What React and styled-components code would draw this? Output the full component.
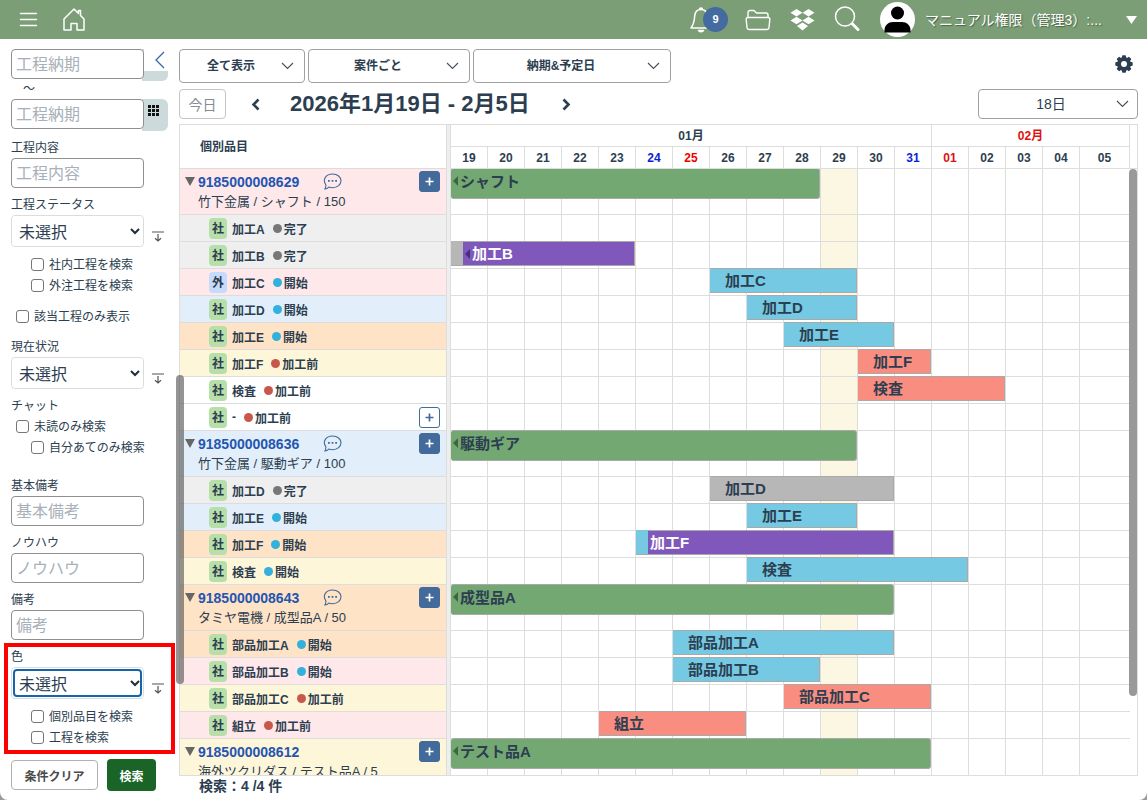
import React from 'react';
import styled, { createGlobalStyle, css } from 'styled-components';

const colors = {
  header: '#7b9e76',
  text: '#2c3e50',
  link: '#2455b0',
  primary: '#426a9b',
  line: '#dddddd',
  inputLine: '#8f8f8f',
  pink: '#fee8ea',
  gray: '#efefef',
  blue: '#e2effa',
  orange: '#fee3c7',
  yellow: '#fef6d9',
  white: '#ffffff',
};

const barColors = {
  green: '#74a873',
  sky: '#75c9e2',
  salmon: '#f98d80',
  gray: '#b7b7b7',
  purple: '#8058bb',
};

const dotColors = {
  完了: '#777777',
  開始: '#33b1dc',
  加工前: '#c9584c',
};

const GlobalStyle = createGlobalStyle`
  *, *::before, *::after {
    box-sizing: border-box;
  }

  body {
    margin: 0;
    background: #9a9a9a;
    color: ${colors.text};
    font-family: 'Liberation Sans', 'Noto Sans CJK JP', sans-serif;
    font-size: 12px;
  }

  button, input, select {
    font-family: inherit;
    color: inherit;
  }
`;

const Page = styled.div`
  display: flex;
  flex-direction: column;
  height: 100vh;
  overflow: hidden;
  background: #fff;
  border-radius: 0 0 8px 8px;
`;

/* ---------- header ---------- */

const Header = styled.header`
  display: flex;
  align-items: center;
  justify-content: space-between;
  height: 39px;
  flex: none;
  padding: 0 10px 0 19px;
  background: ${colors.header};
  color: #fff;
`;

const HeaderGroup = styled.div`
  display: flex;
  align-items: center;
  gap: ${(props) => props.$gap}px;
`;

const IconButton = styled.button`
  display: flex;
  align-items: center;
  justify-content: center;
  position: relative;
  padding: 0;
  border: 0;
  background: none;
  color: inherit;
  cursor: pointer;

  svg {
    display: block;
  }
`;

const BellButton = styled(IconButton)`
  width: 38px;
  height: 26px;
  justify-content: flex-start;
`;

const Badge = styled.span`
  position: absolute;
  top: 0;
  right: 0;
  width: 25px;
  height: 25px;
  border-radius: 50%;
  background: #436b9f;
  font-size: 11px;
  font-weight: bold;
  line-height: 25px;
  text-align: center;
`;

const UserButton = styled(IconButton)`
  gap: 10px;
  font-size: 14px;
  line-height: 20px;
  text-shadow: 1px 1px 1px rgba(40, 60, 40, 0.6);
`;

const UserName = styled.span`
  width: 191px;
  text-align: left;
  white-space: nowrap;
`;

/* ---------- sidebar ---------- */

const Body = styled.div`
  display: flex;
  flex: 1;
  min-height: 0;
`;

const Sidebar = styled.form`
  position: relative;
  flex: none;
  width: 179px;
  padding: 10px 5px 0 11px;
`;

const DateRow = styled.div`
  display: flex;
  position: relative;
  height: 30px;
`;

const TextInput = styled.input`
  position: relative;
  width: 133px;
  height: 30px;
  padding: 1px 4px 0;
  border: 1px solid ${colors.inputLine};
  border-radius: 4px;
  background: #fff;
  font-size: 16px;

  &::placeholder {
    color: #a8b0ba;
    opacity: 1;
  }
`;

const CalendarButton = styled.button`
  display: flex;
  justify-content: center;
  width: 26px;
  height: 32px;
  margin-left: -2px;
  padding: 6px 4px 0 0;
  border: 0;
  border-radius: 0 6px 6px 0;
  background: #ccdadb;
`;

const CollapseButton = styled(IconButton)`
  position: absolute;
  top: -8px;
  right: 0;
  width: 30px;
  height: 30px;
  padding: 7px 0 0 2px;
  background: #fff;
  color: #3a68ab;
`;

const Tilde = styled.div`
  height: 20px;
  padding-left: 12px;
  line-height: 20px;
`;

const Field = styled.div`
  margin-top: ${(props) => props.$top ?? 6}px;
`;

const FieldLabel = styled.label`
  display: block;
  height: 21px;
  line-height: 22px;
`;

const SelectRow = styled.div`
  display: flex;
  align-items: flex-end;
  gap: 8px;

  ${IconButton} {
    padding-bottom: 5px;
  }
`;

const SelectBox = styled.div`
  position: relative;
  width: 133px;
  height: 32px;
  padding: ${(props) => (props.$focused ? '1px' : '0')};
  border: 1px solid ${(props) => (props.$focused ? '#d3dfe8' : '#dcdcdc')};
  border-radius: 4px;

  svg {
    position: absolute;
    right: 3px;
    top: 12px;
    pointer-events: none;
  }

  select {
    appearance: none;
    width: 100%;
    height: 100%;
    padding: 2px 20px 0 ${(props) => (props.$focused ? '4px' : '7px')};
    border: ${(props) => (props.$focused ? '2px solid #1765a8' : '0')};
    border-radius: 4px;
    background: #fff;
    font-size: 16px;
  }
`;

const CheckList = styled.div`
  margin-top: ${(props) => props.$top ?? 0}px;
`;

const CheckLabel = styled.label`
  display: flex;
  align-items: center;
  gap: 5px;
  height: 21px;
  padding: 0 0 2px ${(props) => (props.$nested ? '20px' : '5px')};
  white-space: nowrap;

  input {
    appearance: none;
    flex: none;
    width: 13px;
    height: 13px;
    margin: 2px 0 0;
    border: 1px solid #767676;
    border-radius: 3px;
    background: #fff;
  }
`;

const Highlight = styled.div`
  width: 171px;
  margin: 3px 0 0 -7px;
  padding: 0 0 2px 3px;
  border: 4px solid #fe0000;

  ${FieldLabel} {
    height: 20px;
    line-height: 20px;
  }
`;

const Actions = styled.div`
  display: flex;
  align-items: center;
  gap: 9px;
  margin-top: 5px;
`;

const ClearButton = styled.button`
  width: 87px;
  height: 30px;
  padding: 0;
  border: 1px solid #b0b0b0;
  border-radius: 4px;
  background: #fff;
  color: #4a4a4a;
  font-size: 12px;
  font-weight: bold;
`;

const SearchButton = styled.button`
  width: 49px;
  height: 32px;
  padding: 0;
  border: 0;
  border-radius: 4px;
  background: #1b6428;
  color: #fff;
  font-size: 12px;
  font-weight: bold;
`;

const SidebarThumb = styled.div`
  position: absolute;
  top: 336px;
  right: -5px;
  z-index: 3;
  width: 8px;
  height: 309px;
  border-radius: 4px;
  background: rgba(90, 90, 90, 0.65);
`;

/* ---------- main ---------- */

const Main = styled.main`
  display: flex;
  flex-direction: column;
  flex: 1;
  min-width: 0;
  padding: 10px 9px 0 0;
`;

const Toolbar = styled.div`
  display: flex;
  align-items: center;
  gap: 3px;
  margin-bottom: ${(props) => props.$bottom}px;

  > :last-child {
    margin-left: auto;
  }
`;

const Dropdown = styled.div`
  position: relative;
  width: ${(props) => props.$width}px;
  height: ${(props) => (props.$light ? 30 : 34)}px;

  select {
    appearance: none;
    width: 100%;
    height: 100%;
    padding: 0 ${(props) => (props.$light ? 14 : 22)}px 0 0;
    border: 1px solid #a0a0a0;
    border-radius: 4px;
    background: #fff;
    font-size: ${(props) => (props.$light ? 14 : 12)}px;
    font-weight: ${(props) => (props.$light ? 'normal' : 'bold')};
    text-align-last: center;
  }

  svg {
    position: absolute;
    top: 50%;
    right: ${(props) => (props.$light ? 9 : 11)}px;
    margin-top: -4px;
    pointer-events: none;
  }
`;

const GearButton = styled(IconButton)`
  width: 28px;
  height: 30px;
  padding-bottom: 4px;
`;

const TodayButton = styled.button`
  width: 47px;
  height: 30px;
  margin-right: 16px;
  padding: 0;
  border: 1px solid #c4c4c4;
  border-radius: 4px;
  background: #fff;
  color: #858d94;
  font-size: 14px;
`;

const Period = styled.h1`
  margin: 0 24px 0 22px;
  font-size: 22px;
  line-height: 30px;
  white-space: nowrap;
`;

const StepButton = styled(IconButton)`
  width: 20px;
  height: 30px;
`;

const Chart = styled.div`
  position: relative;
  display: flex;
  flex: 1;
  min-height: 0;
  border: 1px solid ${colors.line};
`;

const Table = styled.table`
  display: flex;
  flex-direction: column;
  flex: 1;
  min-width: 0;

  tbody {
    display: block;
    flex: 1;
    min-height: 0;
    overflow: hidden;
  }

  td, th {
    display: block;
    min-width: 0;
    padding: 0;
  }
`;

const gridRow = css`
  display: grid;
  grid-template-columns: 266px 5px repeat(17, minmax(0, 37fr)) minmax(0, 50fr) 7px;
`;

const HeadRows = styled.thead`
  display: block;

  tr {
    ${gridRow}
    grid-template-rows: 22px 22px;
  }
`;

const ItemHead = styled.th`
  grid-row: 1 / 3;
  border-bottom: 1px solid ${colors.line};

  && {
    padding-left: 20px;
  }
  line-height: 45px;
  text-align: left;
`;

const Splitter = styled.td`
  grid-row: 1 / ${(props) => (props.$tall ? 3 : 2)};
  grid-column: 2;
  border: solid ${colors.line};
  border-width: 0 1px;
  background: #eee;
`;

const MonthHead = styled.th`
  grid-row: 1;
  grid-column: ${(props) => props.$from} / ${(props) => props.$to};
  border: solid ${colors.line};
  border-width: 0 1px 1px 0;
  color: ${(props) => props.$color};
  line-height: 23px;
`;

const DayHead = styled.th`
  grid-row: 2;
  border: solid ${colors.line};
  border-width: 0 1px 1px 0;
  color: ${(props) => props.$color};
  line-height: 23px;
`;

const HeadGutter = styled.td`
  grid-row: 1 / 3;
  grid-column: -2 / -1;
  border-bottom: 1px solid ${colors.line};
`;

const Row = styled.tr`
  ${gridRow}
  grid-template-rows: ${(props) => (props.$group ? 46 : 27)}px;
`;

const ItemCell = styled.td`
  grid-row: 1;
  border-bottom: 1px solid ${colors.line};
  background: ${(props) => colors[props.$tint]};
`;

const DayCell = styled.td`
  grid-row: 1;
  border: solid ${colors.line};
  border-width: 0 1px 1px 0;
  background: ${(props) => (props.$today ? '#fcf7e2' : '#fff')};

  &:last-of-type {
    border-right: 0;
  }
`;

const BarCell = styled.td`
  z-index: 1;
  display: flex !important;
  grid-row: 1;
  grid-column: ${(props) => props.$from + 3} / span ${(props) => props.$days};
  height: ${(props) => (props.$group ? 31 : 25)}px;
  margin: -1px 1px 0 0;
`;

const Lead = styled.span`
  width: 12px;
  flex: none;
  border-bottom: 1px solid #a9a9a9;
  background: ${(props) => barColors[props.$color]};
`;

const Bar = styled.div`
  display: flex;
  flex: 1;
  min-width: 0;
  padding-left: ${(props) => props.$pad}px;
  border: 1px solid #a9a9a9;
  border-left: 0;
  border-radius: ${(props) => (props.$group ? '3px' : '0')};
  background: ${(props) => barColors[props.$color]};
  color: ${(props) => (props.$color === 'purple' ? '#fff' : colors.text)};
  font-size: 15px;
  font-weight: bold;
  line-height: ${(props) => (props.$group ? 25 : 23)}px;
  white-space: nowrap;
`;

const BackMark = styled.span`
  width: 0;
  height: 0;
  margin: 7px 2px 0 0;
  border: solid transparent;
  border-width: 5px 5px 5px 0;
  border-right-color: ${(props) => (props.$dark ? '#4a2c7c' : '#3c6640')};
`;

const GroupHead = styled.div`
  display: flex;
  align-items: center;
  height: 23px;
  padding: 2px 6px 0 5px;
`;

const Triangle = styled.button`
  width: 10px;
  height: 9px;
  padding: 0;
  border: solid transparent;
  border-width: 9px 5px 0;
  border-top-color: #666;
  background: none;
`;

const ItemLink = styled.a`
  margin: 1px 24px 0 3px;
  color: ${colors.link};
  font-size: 14px;
  font-weight: bold;
  text-decoration: none;
`;

const AddButton = styled.button`
  display: flex;
  align-items: center;
  justify-content: center;
  width: 21px;
  height: 21px;
  margin-left: auto;
  padding: 0;
  border: 1px solid ${colors.primary};
  border-radius: 3px;
  background: ${(props) => (props.$outline ? '#fff' : colors.primary)};
  color: ${(props) => (props.$outline ? colors.primary : '#fff')};
`;

const GroupNote = styled.div`
  padding-left: 18px;
  font-size: 13px;
  line-height: 20px;
  white-space: nowrap;
`;

const StepLine = styled.div`
  display: flex;
  align-items: center;
  height: 26px;
  padding: 0 6px 0 29px;
  font-weight: bold;
`;

const Tag = styled.span`
  width: 18px;
  height: 21px;
  margin-right: 5px;
  border-radius: 4px;
  background: ${(props) => (props.$outside ? '#c6dafb' : '#b7dfa9')};
  line-height: 22px;
  text-align: center;
`;

const Dot = styled.span`
  width: 9px;
  height: 9px;
  margin: 0 2px 0 8px;
  border-radius: 50%;
  background: ${(props) => props.$color};
`;

const ChartThumb = styled.div`
  position: absolute;
  top: 44px;
  right: 0;
  width: 8px;
  height: 527px;
  border-radius: 4px;
  background: #999;
`;

const Result = styled.footer`
  height: 24px;
  flex: none;
  padding-left: 20px;
  font-size: 14px;
  font-weight: bold;
  line-height: 20px;
`;

/* ---------- icons ---------- */

const MenuIcon = () => (
  <svg width="19" height="16" viewBox="0 0 19 16" fill="none" stroke="currentColor" strokeWidth="1.4" strokeLinecap="round">
    <path d="M1.5 1.5h16M1.5 7.5h16M1.5 13.5h16" />
  </svg>
);

const HomeIcon = () => (
  <svg width="22" height="24" viewBox="0 0 22 24" fill="none" stroke="currentColor" strokeWidth="1.5" strokeLinejoin="round">
    <path d="M1 11 11 1l4.500 4.500V2.500H17.500v5L21 11V22h-7v-6.500H8V22H1z" />
  </svg>
);

const BellIcon = () => (
  <svg width="22" height="26" viewBox="0 0 22 26" fill="none" stroke="currentColor" strokeWidth="1.500" strokeLinejoin="round">
    <path d="M11 2.500c-4 0-6 3-6.300 6.500C4.400 14 3.500 17.500 1 21h20c-2.500-3.500-3.400-7-3.700-12C17 5.500 15 2.500 11 2.500zM9.500 2.300c0-1.600 3-1.600 3 0" />
    <path d="M8.500 23.500c.6 1.600 4.400 1.600 5 0z" fill="currentColor" />
  </svg>
);

const FolderIcon = () => (
  <svg width="26" height="22" viewBox="0 0 26 22" fill="none" stroke="currentColor" strokeWidth="1.400" strokeLinejoin="round">
    <path d="M3 8.500V3.500Q3 1.500 5 1.500h4l2.500 2.500H21q2 0 2 2v2.500" />
    <path d="M3 8.500h20q2 0 1.800 2L24 18.500q-.2 2-2 2H4q-1.800 0-2-2L1.200 10.500Q1 8.500 3 8.500z" />
  </svg>
);

const DropboxIcon = () => (
  <svg width="25" height="22" viewBox="0 0 25 22" fill="currentColor">
    <path d="M6.500 0l6 3.800-6 3.800-6-3.800zM18.500 0l6 3.800-6 3.800-6-3.800zM6.500 7.700l6 3.800-6 3.800-6-3.800zM18.500 7.700l6 3.800-6 3.800-6-3.800zM12.500 13.400l5.500 3.500-5.500 4.500L7 16.900z" />
  </svg>
);

const SearchIcon = () => (
  <svg width="27" height="27" viewBox="0 0 27 27" fill="none" stroke="currentColor" strokeLinecap="round">
    <circle cx="11" cy="10.500" r="9.500" strokeWidth="1.500" />
    <path d="M18.500 18l5.500 5.500" strokeWidth="3" />
  </svg>
);

const AvatarIcon = () => (
  <svg width="35" height="35" viewBox="0 0 35 35">
    <circle cx="17.500" cy="17.500" r="17.500" fill="#fff" />
    <circle cx="17.500" cy="11" r="6.500" fill="#000" />
    <path d="M4.500 30.500V28c0-4.500 4-8 8.500-8h9c4.500 0 8.500 3.500 8.500 8v2.500z" fill="#000" />
  </svg>
);

const CaretIcon = () => (
  <svg width="11" height="8" viewBox="0 0 11 8" fill="currentColor">
    <path d="M0 0h11L5.500 8z" />
  </svg>
);

const ChevronIcon = () => (
  <svg width="13" height="8" viewBox="0 0 13 8" fill="none" stroke="#44505c" strokeWidth="1.100">
    <path d="M1 1l5.500 5.500L12 1" />
  </svg>
);

const SmallChevron = () => (
  <svg width="10" height="7" viewBox="0 0 10 7" fill="none" stroke="#1f2d3a" strokeWidth="2">
    <path d="M1 1l4 4 4-4" />
  </svg>
);

const CollapseIcon = () => (
  <svg width="10" height="18" viewBox="0 0 10 18" fill="none" stroke="currentColor" strokeWidth="1.300">
    <path d="M9 1L1 9l8 8" />
  </svg>
);

const GridIcon = () => (
  <svg width="11" height="11" viewBox="0 0 11 11" fill="#111">
    {[0, 4, 8].map((y) => [0, 4, 8].map((x) => <rect key={`${x}-${y}`} x={x} y={y} width="3" height="3" />))}
  </svg>
);

const ExpandIcon = () => (
  <svg width="12" height="11" viewBox="0 0 12 11" fill="none" stroke="#555" strokeWidth="1.200">
    <path d="M0 1h12M6 3v7M3 7.200l3 2.800 3-2.800" />
  </svg>
);

const GearIcon = () => (
  <svg width="18" height="18" viewBox="-9 -9 18 18" fill={colors.text}>
    {[0, 45, 90, 135].map((angle) => (
      <rect key={angle} x="-2" y="-8.700" width="4" height="17.400" rx="1" transform={`rotate(${angle})`} />
    ))}
    <circle r="7" />
    <circle r="3" fill="#fff" />
  </svg>
);

const StepIcon = ({ next }) => (
  <svg width="9" height="13" viewBox="0 0 9 13" fill="none" stroke={colors.text} strokeWidth="2.600">
    <path d={next ? 'M1.500 1.500l5 5-5 5' : 'M7.500 1.500l-5 5 5 5'} />
  </svg>
);

const ChatIcon = () => (
  <svg width="19" height="18" viewBox="0 0 19 18" fill="none" stroke={colors.primary} strokeWidth="1.100">
    <path d="M2.700 11.500C-.8 6.500 3 1 9.500 1 14.500 1 18 4 18 7.800s-3.500 6.900-8.500 6.900c-1.500 0-2.600-.2-3.600-.6-1.100 1.200-2.500 1.900-4 1.900.8-1.300 1.200-2.900.8-4.500z" />
    <path d="M5 7.800h1.800M8.600 7.800h1.800M12.200 7.800H14" strokeWidth="1.800" />
  </svg>
);

const PlusIcon = () => (
  <svg width="9" height="9" viewBox="0 0 9 9" fill="none" stroke="currentColor" strokeWidth="1.700">
    <path d="M4.500 .5v8M.5 4.500h8" />
  </svg>
);

/* ---------- data ---------- */

const days = ['19', '20', '21', '22', '23', '24', '25', '26', '27', '28', '29', '30', '31', '01', '02', '03', '04', '05'];
const dayColors = { 24: '#0b1fd8', 31: '#0b1fd8', 25: '#ee0000', '01': '#dd1111' };
const today = 10;

const groups = [
  {
    code: '9185000008629', note: '竹下金属 / シャフト / 150', tint: 'pink', chat: true,
    bar: { label: 'シャフト', from: 0, days: 10 },
    steps: [
      { name: '加工A', status: '完了', tint: 'gray' },
      { name: '加工B', status: '完了', tint: 'gray', bar: { from: 0, days: 5, color: 'purple', lead: 'gray', back: true } },
      { name: '加工C', status: '開始', tint: 'pink', outside: true, bar: { from: 7, days: 4, color: 'sky' } },
      { name: '加工D', status: '開始', tint: 'blue', bar: { from: 8, days: 3, color: 'sky' } },
      { name: '加工E', status: '開始', tint: 'orange', bar: { from: 9, days: 3, color: 'sky' } },
      { name: '加工F', status: '加工前', tint: 'yellow', bar: { from: 11, days: 2, color: 'salmon' } },
      { name: '検査', status: '加工前', tint: 'white', bar: { from: 11, days: 4, color: 'salmon' } },
      { name: '-', status: '加工前', tint: 'white', add: true },
    ],
  },
  {
    code: '9185000008636', note: '竹下金属 / 駆動ギア / 100', tint: 'blue', chat: true,
    bar: { label: '駆動ギア', from: 0, days: 11 },
    steps: [
      { name: '加工D', status: '完了', tint: 'gray', bar: { from: 7, days: 5, color: 'gray' } },
      { name: '加工E', status: '開始', tint: 'blue', bar: { from: 8, days: 3, color: 'sky' } },
      { name: '加工F', status: '開始', tint: 'orange', bar: { from: 5, days: 7, color: 'purple', lead: 'sky' } },
      { name: '検査', status: '開始', tint: 'yellow', bar: { from: 8, days: 6, color: 'sky' } },
    ],
  },
  {
    code: '9185000008643', note: 'タミヤ電機 / 成型品A / 50', tint: 'orange', chat: true,
    bar: { label: '成型品A', from: 0, days: 12 },
    steps: [
      { name: '部品加工A', status: '開始', tint: 'orange', bar: { from: 6, days: 6, color: 'sky' } },
      { name: '部品加工B', status: '開始', tint: 'pink', bar: { from: 6, days: 4, color: 'sky' } },
      { name: '部品加工C', status: '加工前', tint: 'yellow', bar: { from: 9, days: 4, color: 'salmon' } },
      { name: '組立', status: '加工前', tint: 'pink', bar: { from: 4, days: 4, color: 'salmon' } },
    ],
  },
  {
    code: '9185000008612', note: '海外ツクリダス / テスト品A / 5', tint: 'yellow',
    bar: { label: 'テスト品A', from: 0, days: 13 },
    steps: [],
  },
];

/* ---------- parts ---------- */

const TextField = ({ id, label, top }) => (
  <Field $top={top}>
    <FieldLabel htmlFor={id}>{label}</FieldLabel>
    <TextInput id={id} type="text" placeholder={label} />
  </Field>
);

const SelectField = ({ id, label, top, focused }) => (
  <Field $top={top}>
    <FieldLabel htmlFor={id}>{label}</FieldLabel>
    <SelectRow>
      <SelectBox $focused={focused}>
        <select id={id}>
          <option>未選択</option>
        </select>
        <SmallChevron />
      </SelectBox>
      <IconButton type="button" aria-label={`${label}を展開`}>
        <ExpandIcon />
      </IconButton>
    </SelectRow>
  </Field>
);

const Check = ({ label, nested }) => (
  <CheckLabel $nested={nested}>
    <input type="checkbox" />
    {label}
  </CheckLabel>
);

const Picker = ({ label, value, width, light }) => (
  <Dropdown $width={width} $light={light}>
    <select aria-label={label}>
      <option>{value}</option>
    </select>
    <ChevronIcon />
  </Dropdown>
);

const DayCells = () => days.map((day, index) => <DayCell key={day} $today={index === today} style={{ gridColumn: index + 3 }} />);

const GroupRow = ({ group }) => (
  <Row $group>
    <ItemCell $tint={group.tint}>
      <GroupHead>
        <Triangle type="button" aria-label="折りたたむ" />
        <ItemLink href="#item">{group.code}</ItemLink>
        {group.chat && (
          <IconButton type="button" aria-label="チャット">
            <ChatIcon />
          </IconButton>
        )}
        <AddButton type="button" aria-label="追加">
          <PlusIcon />
        </AddButton>
      </GroupHead>
      <GroupNote>{group.note}</GroupNote>
    </ItemCell>
    <Splitter />
    <BarCell $group $from={group.bar.from} $days={group.bar.days}>
      <Bar $group $color="green" $pad={2}>
        <BackMark />
        {group.bar.label}
      </Bar>
    </BarCell>
    <DayCells />
  </Row>
);

const StepRow = ({ step }) => {
  const { bar } = step;
  return (
    <Row>
      <ItemCell $tint={step.tint}>
        <StepLine>
          <Tag $outside={step.outside}>{step.outside ? '外' : '社'}</Tag>
          {step.name}
          <Dot $color={dotColors[step.status]} />
          {step.status}
          {step.add && (
            <AddButton type="button" $outline aria-label="追加">
              <PlusIcon />
            </AddButton>
          )}
        </StepLine>
      </ItemCell>
      <Splitter />
      {bar && (
        <BarCell $from={bar.from} $days={bar.days}>
          {bar.lead && <Lead $color={bar.lead} />}
          <Bar $color={bar.color} $pad={bar.lead ? 2 : 15}>
            {bar.back && <BackMark $dark />}
            {step.name}
          </Bar>
        </BarCell>
      )}
      <DayCells />
    </Row>
  );
};

const App = () => (
  <>
    <GlobalStyle />
    <Page>
      <Header>
        <HeaderGroup $gap={25}>
          <IconButton type="button" aria-label="メニュー">
            <MenuIcon />
          </IconButton>
          <IconButton type="button" aria-label="ホーム">
            <HomeIcon />
          </IconButton>
        </HeaderGroup>
        <HeaderGroup $gap={19}>
          <HeaderGroup $gap={17}>
            <BellButton type="button" aria-label="通知">
              <BellIcon />
              <Badge>9</Badge>
            </BellButton>
            <IconButton type="button" aria-label="フォルダ">
              <FolderIcon />
            </IconButton>
          </HeaderGroup>
          <IconButton type="button" aria-label="Dropbox">
            <DropboxIcon />
          </IconButton>
          <IconButton type="button" aria-label="検索">
            <SearchIcon />
          </IconButton>
          <UserButton type="button">
            <AvatarIcon />
            <UserName>マニュアル権限（管理3）:...</UserName>
            <CaretIcon />
          </UserButton>
        </HeaderGroup>
      </Header>

      <Body>
        <Sidebar>
          <DateRow>
            <TextInput type="text" placeholder="工程納期" aria-label="工程納期 開始" />
            <CalendarButton type="button" aria-label="カレンダー" />
            <CollapseButton type="button" aria-label="閉じる">
              <CollapseIcon />
            </CollapseButton>
          </DateRow>
          <Tilde>〜</Tilde>
          <DateRow>
            <TextInput type="text" placeholder="工程納期" aria-label="工程納期 終了" />
            <CalendarButton type="button" aria-label="カレンダー">
              <GridIcon />
            </CalendarButton>
          </DateRow>
          <TextField id="content" label="工程内容" top={8} />
          <SelectField id="status" label="工程ステータス" />
          <CheckList $top={7}>
            <Check label="社内工程を検索" nested />
            <Check label="外注工程を検索" nested />
          </CheckList>
          <CheckList $top={10}>
            <Check label="該当工程のみ表示" />
          </CheckList>
          <SelectField id="current" label="現在状況" top={9} />
          <Field>
            <FieldLabel as="div">チャット</FieldLabel>
            <Check label="未読のみ検索" />
            <Check label="自分あてのみ検索" nested />
          </Field>
          <TextField id="basic" label="基本備考" top={17} />
          <TextField id="knowhow" label="ノウハウ" />
          <TextField id="remarks" label="備考" />
          <Highlight>
            <SelectField id="color" label="色" top={0} focused />
            <CheckList $top={7}>
              <Check label="個別品目を検索" nested />
              <Check label="工程を検索" nested />
            </CheckList>
          </Highlight>
          <Actions>
            <ClearButton type="reset">条件クリア</ClearButton>
            <SearchButton type="button">検索</SearchButton>
          </Actions>
          <SidebarThumb />
        </Sidebar>

        <Main>
          <Toolbar $bottom={6}>
            <Picker label="表示" value="全て表示" width={126} />
            <Picker label="単位" value="案件ごと" width={162} />
            <Picker label="日付" value="納期&予定日" width={198} />
            <GearButton type="button" aria-label="設定">
              <GearIcon />
            </GearButton>
          </Toolbar>
          <Toolbar $bottom={5}>
            <TodayButton type="button">今日</TodayButton>
            <StepButton type="button" aria-label="前へ">
              <StepIcon />
            </StepButton>
            <Period>2026年1月19日 - 2月5日</Period>
            <StepButton type="button" aria-label="次へ">
              <StepIcon next />
            </StepButton>
            <Picker label="期間" value="18日" width={160} light />
          </Toolbar>

          <Chart>
            <Table>
              <HeadRows>
                <tr>
                  <ItemHead>個別品目</ItemHead>
                  <Splitter $tall />
                  <MonthHead $from={3} $to={16}>01月</MonthHead>
                  <MonthHead $from={16} $to={21} $color="#dd1111">02月</MonthHead>
                  {days.map((day, index) => (
                    <DayHead key={day} $color={dayColors[day]} style={{ gridColumn: index + 3 }}>
                      {day}
                    </DayHead>
                  ))}
                  <HeadGutter />
                </tr>
              </HeadRows>
              <tbody>
                {groups.map((group) => (
                  <React.Fragment key={group.code}>
                    <GroupRow group={group} />
                    {group.steps.map((step) => (
                      <StepRow key={step.name} step={step} />
                    ))}
                  </React.Fragment>
                ))}
              </tbody>
            </Table>
            <ChartThumb />
          </Chart>
          <Result>検索：4 /4 件</Result>
        </Main>
      </Body>
    </Page>
  </>
);

export default App;
